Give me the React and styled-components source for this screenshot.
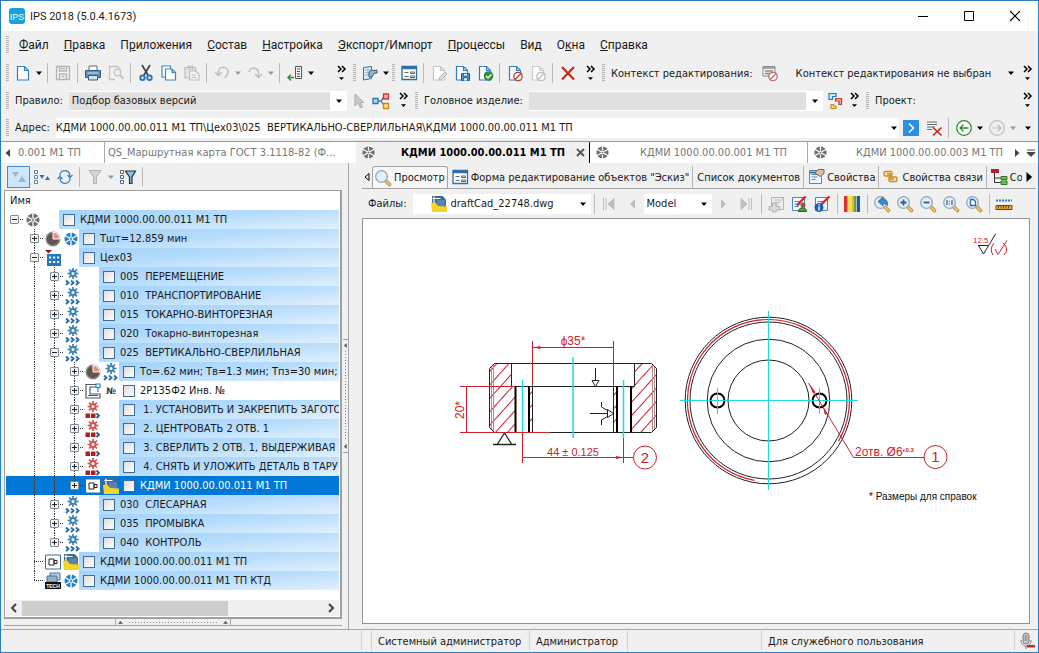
import React from "react";
import styled, { createGlobalStyle, css } from "styled-components";

const GlobalStyle = createGlobalStyle`
  * {
    box-sizing: border-box;
  }
  body {
    margin: 0;
    background: #f0f0f0;
    color: #1a1a1a;
    font-family: "DejaVu Sans Condensed", "DejaVu Sans", sans-serif;
    font-size: 11px;
  }
  button, input, select {
    font: inherit;
    color: inherit;
    border: 0;
    padding: 0;
    margin: 0;
    background: none;
  }
`;

//Icons, all drawn on a 16px grid
const Svg = styled.svg`
  display: block;
  flex: none;
  overflow: visible;
`;

const Page = ({ c = "#2f7fc0" }) => (
  <path d="M2.500 1.500h7l4 4v9.500h-11zM9.500 1.500v4h4" fill="#fff" stroke={c} strokeWidth="1.200" />
);
const Ban = ({ c = "#c0392b" }) => (
  <g fill="#fff" stroke={c} strokeWidth="1.300">
    <circle cx="11" cy="11.500" r="4.200" />
    <path d="M8 14.500l6-6" />
  </g>
);
const Gear = ({ c }) => (
  <g stroke={c} fill="none">
    <circle cx="8" cy="4.500" r="2.600" strokeWidth="2" />
    <path d="M8-1v2.500M8 7.500V10M2.500 4.500H5M11 4.500h2.500M4 .5L6 2.500M10 6.500l2 2M12 .5L10 2.500M6 6.500l-2 2" strokeWidth="1.700" />
  </g>
);
const Chevrons = ({ c = "#2f6fa5" }) => (
  <path d="M1 11.500l2.500 2.300L1 16M6 11.500l2.500 2.300L6 16M11 11.500l2.500 2.300L11 16" fill="none" stroke={c} strokeWidth="2" />
);
const Wheel = ({ c }) => (
  <g>
    <circle cx="8" cy="8" r="6.500" fill={c} />
    <path d="M2 4.500l12 7M14 4.500l-12 7M8 1v5M8 10v5" stroke="#fff" strokeWidth="1.300" />
    <circle cx="8" cy="8" r="1.800" fill="#fff" />
    <circle cx="8" cy="8" r="1" fill={c} />
  </g>
);
const Lens = ({ children }) => (
  <g>
    <path d="M10.500 10.500l4 4" stroke="#b8902f" strokeWidth="3.600" strokeLinecap="round" />
    <path d="M10.500 10.500l4 4" stroke="#f0d27a" strokeWidth="1.600" strokeLinecap="round" />
    <circle cx="6.500" cy="6.500" r="5.800" fill="#e2effa" stroke="#93a5b5" strokeWidth="1.300" />
    {children}
  </g>
);
const Sheet = ({ c = "#4a86c0" }) => (
  <g>
    <path d="M1.500 1.500h12v13h-12z" fill="#f2f8ff" stroke={c} />
    <path d="M3.500 5.500h6M3.500 8h6M3.500 10.500h4" stroke={c} />
  </g>
);
const Clock = () => (
  <g>
    <circle cx="8" cy="8" r="6.800" fill="#5f5552" stroke="#8d8887" strokeWidth="1.400" />
    <path d="M8 8V1.200A6.800 6.800 0 0 1 14.800 8z" fill="#e88d84" stroke="#fff" />
  </g>
);

const glyphs = {
  page: <Page />,
  save: (
    <g fill="none" stroke="#b4b4b4" strokeWidth="1.300">
      <path d="M1.500 1.500h13v13h-13zM4.500 1.500v4.500h7V1.500M4.500 14.500V9h7v5.500M6.500 11.500h3M6 3.700h4" />
    </g>
  ),
  print: (
    <g>
      <path d="M4 1h8v5H4z" fill="#fff" stroke="#52697c" />
      <path d="M.5 5.500h15v7H.5z" fill="#5d8fb8" stroke="#3b5c79" />
      <path d="M2.500 8h11" stroke="#d6e8f5" />
      <path d="M3.500 10.500h9v4.500h-9z" fill="#cfe6f8" stroke="#3b5c79" />
    </g>
  ),
  preview: (
    <g fill="none" stroke="#c4c4c4" strokeWidth="1.300">
      <path d="M7 14.500H1.500v-13h8l3 3" />
      <circle cx="9.500" cy="7.500" r="3.300" />
      <path d="M12 10l3.500 4" strokeWidth="2" />
    </g>
  ),
  cut: (
    <g fill="none">
      <path d="M4 0l6.500 11M12 0L5.500 11" stroke="#3a4650" strokeWidth="1.700" />
      <circle cx="4.500" cy="12.700" r="2.200" stroke="#2b76b5" strokeWidth="2" />
      <circle cx="11.500" cy="12.700" r="2.200" stroke="#2b76b5" strokeWidth="2" />
    </g>
  ),
  copy: (
    <g fill="#fff" stroke="#3f86b8" strokeWidth="1.200">
      <path d="M1 1h8.500v11H1z" />
      <path d="M4.500 4h6.500l3.500 3.500v7.500h-10zM11 4v3.500h3.500" />
    </g>
  ),
  paste: (
    <g fill="#e8e8e8" stroke="#bcbcbc" strokeWidth="1.200">
      <path d="M1 2.500h10.500V13H1zM4 1h4.500v3H4z" />
      <path d="M5.500 6h6l3.500 3v6H5.500zM7.500 10h5M7.500 12.500h5" fill="#f5f5f5" />
    </g>
  ),
  undo: <path d="M1 7l3.500 3.500L8 7M4.500 10V7a4.800 4.800 0 0 1 9.600 0c0 3-2 4.500-3.500 6" fill="none" stroke="#bdbdbd" strokeWidth="1.400" />,
  redo: <path d="M15 9l-3.500 3.500L8 9M11.500 12V8A4.800 4.800 0 0 0 2 7" fill="none" stroke="#bdbdbd" strokeWidth="1.400" />,
  insert: (
    <g fill="none">
      <path d="M8.500 1.500h6v12h-6z" stroke="#555" />
      <path d="M10 4h3M10 6.500h3M10 9h3M10 11.500h3" stroke="#555" />
      <path d="M7 12.500H1M4 9.500l-3 3 3 3" stroke="#2e8b3d" strokeWidth="1.500" />
    </g>
  ),
  plug: (
    <g>
      <path d="M1.500 2.500l8-1v12l-8 1.500z" fill="#d7e9f8" stroke="#3f6f9c" />
      <path d="M3.500 5l4-.5M3.500 7.500l4-.5M3.500 10l4-.5" stroke="#7daad0" />
      <path d="M7 7l2-2 3 .5 3-.5v3l-3 .5-2 3.500H7z" fill="#8fb3d0" stroke="#4b5b68" />
    </g>
  ),
  form: (
    <g>
      <path d="M1 1.500h14.500v13H1z" fill="#fff" stroke="#2f6fa5" strokeWidth="1.300" />
      <path d="M1 3h14.500" stroke="#2f6fa5" strokeWidth="2.500" />
      <path d="M3.500 7.500h4M3.500 11.500h4M9.500 7h4v1.500h-4zM9.500 11h4v1.500h-4z" fill="none" stroke="#5c6770" />
    </g>
  ),
  edit: (
    <g>
      <Page c="#c4c4c4" />
      <path d="M8 13l6-6 2 2-6 6H8z" fill="#ddd" stroke="#b5b5b5" />
    </g>
  ),
  pageSave: (
    <g>
      <Page />
      <path d="M7.500 8.500h8v7h-8z" fill="#3f93d6" stroke="#1e5e97" />
      <path d="M9.500 8.500h4v2.500h-4zM9.500 15.500v-2.500h4v2.500" fill="#fff" stroke="#1e5e97" strokeWidth=".8" />
    </g>
  ),
  pageOk: (
    <g>
      <Page />
      <circle cx="11.500" cy="11" r="4.800" fill="#2d8a3e" />
      <path d="M9 11l2 2 3.500-3.500" fill="none" stroke="#fff" strokeWidth="1.500" />
    </g>
  ),
  pageBan: (
    <g>
      <Page />
      <Ban />
    </g>
  ),
  pageBanOff: (
    <g>
      <Page c="#cbcbcb" />
      <Ban c="#bcbcbc" />
    </g>
  ),
  remove: <path d="M2 2l12 12.500M14 2L2 14.500" fill="none" stroke="#c42b1c" strokeWidth="2.200" />,
  context: (
    <g>
      <path d="M1 1.500h12v9.500H1z" fill="#f4f4f4" stroke="#8a8a8a" />
      <path d="M1 3h12M3 6h8M3 8.500h5" stroke="#8a8a8a" strokeWidth="1.500" />
      <Ban c="#c0706a" />
    </g>
  ),
  pointer: <path d="M5 1v12l3-3 2.500 5 2-1L10 9.500h4z" fill="#c8c8c8" stroke="#adadad" />,
  links: (
    <g strokeWidth="1.300">
      <path d="M5 8h3l3-4.500M8 8l3 4.500" fill="none" stroke="#6b6b6b" />
      <path d="M0 5.500h5v5H0z" fill="#a9dcf5" stroke="#2379b5" />
      <path d="M10.500 1h5v5h-5z" fill="#f5a9a9" stroke="#c23b3b" />
      <path d="M10.500 10.500h5v5h-5z" fill="#f9e08b" stroke="#c78a1a" />
    </g>
  ),
  parts: (
    <g strokeWidth="1.200">
      <path d="M2 6.500v-6h7v3H5.500v3z" fill="#c7e8fa" stroke="#2379b5" />
      <path d="M8.500 5.500h6v6H12V8H8.500z" fill="#f5a9a9" stroke="#c23b3b" />
      <path d="M4 11.500v4h5V13H6.500v-1.500z" fill="#f9e08b" stroke="#c78a1a" />
    </g>
  ),
  go: (
    <g>
      <path d="M0 0h16v16H0z" fill="#2d8fe0" />
      <path d="M6 3.500L10.500 8 6 12.500" fill="none" stroke="#fff" strokeWidth="1.500" />
    </g>
  ),
  clearList: (
    <g>
      <path d="M1 2h10M1 4.500h10M1 7h8M1 9.500h5" stroke="#6b6b6b" />
      <path d="M7 7.500l8.500 8M15.500 7.500L7 15.500" stroke="#c42b1c" strokeWidth="1.700" />
    </g>
  ),
  back: (
    <g fill="none" stroke="#2d8a2d" strokeWidth="1.300">
      <circle cx="8" cy="8" r="7.300" fill="#fff" />
      <path d="M12.500 8H4M7.500 4.500L4 8l3.500 3.500" />
    </g>
  ),
  forward: (
    <g fill="none" stroke="#bdbdbd" strokeWidth="1.200">
      <circle cx="8" cy="8" r="7.300" />
      <path d="M3.500 8H12M8.500 4.500L12 8l-3.500 3.500" />
    </g>
  ),
  wheel: <Wheel c="#6f6f6f" />,
  wheelBlue: <Wheel c="#2283cc" />,
  sort: (
    <g fill="#9fb4c4">
      <path d="M1 3h7l-3.500 5zM7 13h8l-4-6z" />
    </g>
  ),
  sortList: (
    <g>
      <path d="M.5 1.500h3v3h-3zM.5 6.500h3v3h-3zM.5 11.500h3v3h-3z" fill="#fff" stroke="#5a87ae" />
      <path d="M5.500 6h5L8 10zM11 11h5l-2.500-4z" fill="#3a6f9e" />
    </g>
  ),
  refresh: <path d="M3 7V6a5 5 0 0 1 9.500-1.500L13 8M13 9v1a5 5 0 0 1-9.500 1.500L3 8M10.500 6L13 8.500 15.500 6M5.500 10L3 7.500.5 10" fill="none" stroke="#3c87bd" strokeWidth="1.300" />,
  filterOff: <path d="M2 1.500h12L9.500 8v6.500h-3V8z" fill="#d5d5d5" stroke="#b3b3b3" />,
  filter: (
    <g>
      <path d="M.5 1.500h3v3h-3zM.5 6.500h3v3h-3zM.5 11.500h3v3h-3z" fill="#fff" stroke="#4f6a80" />
      <path d="M5.500 2h10L12 8v6.500H9.500V8z" fill="#8ec3ea" stroke="#26333d" strokeWidth="1.200" />
    </g>
  ),
  clock: <Clock />,
  shop: (
    <g>
      <path d="M2 4h14v12H2z" fill="#2478bd" />
      <path d="M4 7.500h2.200M8 7.500h2.200M12 7.500h2.200M4 12h2.200M8 12h2.200M12 12h2.200" stroke="#e9f4fc" strokeWidth="2.200" />
      <path d="M0 0h7L3.500 3.500z" fill="#8f1f1f" />
    </g>
  ),
  operation: (
    <g>
      <Gear c="#3a80b8" />
      <Chevrons />
    </g>
  ),
  step: (
    <g>
      <Gear c="#d0564f" />
      <path d="M.5 11.500H5V16H.5zM6 11.500h4.500V16H6z" fill="#b21d1d" />
      <path d="M11.500 11.500l2.500 2.300-2.500 2.200" fill="none" stroke="#35546e" strokeWidth="1.800" />
    </g>
  ),
  machine: (
    <g fill="#fff" stroke="#4b5c6b" strokeWidth="1.200">
      <path d="M1 1.500h13v2.500H5v7h10v4H1zM3 12.500h10" />
      <path d="M11 1h4v3.500h-4zM13 5v4" stroke="#2283cc" />
    </g>
  ),
  part: (
    <g fill="#fff">
      <path d="M.5 1h15v14H.5z" stroke="#2f6fa5" />
      <path d="M4 5h5v6H4zM9 6.500h3v3H9z" stroke="#222" />
    </g>
  ),
  drawing: (
    <g>
      <path d="M1 0h10.500L15 3.500V15H1z" fill="#3c6a94" />
      <path d="M1.500 2.500h8M3 .5v6" stroke="#fff" strokeWidth="1.200" />
      <path d="M6 4h8v6H6z" fill="#5583b3" />
      <path d="M0 7l4-1 3 4 9 .5V16H1z" fill="#f6d327" />
    </g>
  ),
  tech: (
    <g>
      <path d="M5 0h10v7H5z" fill="#b8d0e4" stroke="#55748f" />
      <path d="M2 3h10v6H2z" fill="#8fb1cc" stroke="#55748f" />
      <path d="M0 9h16v7H0z" fill="#111" />
      <text x="8" y="15" fill="#fff" fontSize="5" fontWeight="bold" textAnchor="middle" fontFamily="Liberation Sans, sans-serif">
        TECH
      </text>
    </g>
  ),
  number: (
    <text x="8" y="11" fontSize="9" fontWeight="bold" textAnchor="middle" fill="#333">
      №
    </text>
  ),
  lens: <Lens />,
  props: (
    <g>
      <Sheet />
      <path d="M1.500 3.500h12" stroke="#3f6f9c" strokeWidth="2" />
      <path d="M7 4l3-3.500h6v4l-4 3z" fill="#e7bd95" stroke="#5c6a86" />
    </g>
  ),
  chain: (
    <g fill="#fbe6bd" stroke="#cc8a22" strokeWidth="1.400">
      <rect x="1" y="2.500" width="8" height="4.500" rx="1.500" />
      <rect x="6" y="8" width="8" height="4.500" rx="1.500" />
      <path d="M4 5h3.500v5H11" fill="none" />
    </g>
  ),
  consist: (
    <g>
      <path d="M3.500 4v9.500H10M3.500 9H10" fill="none" stroke="#333" />
      <path d="M0 0h8v4H0z" fill="#b71f2b" />
      <path d="M10 7.500h6v3h-6zM10 12h6v3.500h-6z" fill="#6cc04a" stroke="#2f7a26" />
    </g>
  ),
  first: <path d="M2.500 2v12M5 2v12M13 2.500v11L7 8z" fill="#bdbdbd" stroke="#bdbdbd" />,
  prev: <path d="M11 3v10L6 8z" fill="#bdbdbd" />,
  next: <path d="M6 3v10l5-5z" fill="#bdbdbd" />,
  last: <path d="M3 2.500v11L9 8zM11 2v12M13.500 2v12" fill="#bdbdbd" stroke="#bdbdbd" />,
  addNote: (
    <g>
      <path d="M3.500 1.500h12v12h-12z" fill="#eee" stroke="#b5b5b5" />
      <path d="M6 4h6M6 6.500h5M7 11l9-10" stroke="#bcbcbc" />
      <path d="M1 10.500h3.500V7H8v3.500h3.500V14H8v2H4.500v-2H1z" fill="#ddd" stroke="#b0b0b0" />
    </g>
  ),
  noteUser: (
    <g>
      <Sheet />
      <path d="M6 9.500l8.500-9" stroke="#cc2a2a" strokeWidth="2.400" />
      <circle cx="12" cy="9" r="2.500" fill="#8a5a3a" />
      <path d="M7.500 15.500c0-5 8-5 8 0z" fill="#4e9a3e" stroke="#2c5e24" />
    </g>
  ),
  noteInfo: (
    <g>
      <Sheet />
      <path d="M7 8.500l8.500-8" stroke="#cc2a2a" strokeWidth="2.400" />
      <circle cx="5" cy="11.500" r="4.500" fill="#1f62b3" />
      <path d="M5 10.500v4M5 8.300v1.200" stroke="#fff" strokeWidth="1.400" />
    </g>
  ),
  colors: (
    <g>
      <path d="M0 0h3.500v16H0z" fill="#d8302f" />
      <path d="M4 0h3v16H4z" fill="#f3e04b" />
      <path d="M7.500 0h2.500v16H7.500z" fill="#eab63a" />
      <path d="M10 0h2.500v16H10z" fill="#58a55a" />
      <path d="M13 0h3v16h-3z" fill="#2553b8" />
    </g>
  ),
  zoomBack: (
    <Lens>
      <path d="M4 5.500L9 1v2.500c4 0 5 3 4.500 6C12.500 8 11 7.500 9 7.500V10z" fill="#3a8ad0" stroke="#1e5e97" strokeWidth=".8" />
    </Lens>
  ),
  zoomIn: (
    <Lens>
      <path d="M3.500 6.500h6M6.500 3.500v6" stroke="#2b5f93" strokeWidth="1.800" />
    </Lens>
  ),
  zoomOut: (
    <Lens>
      <path d="M3.500 6.500h6" stroke="#2b5f93" strokeWidth="1.800" />
    </Lens>
  ),
  zoomOne: (
    <Lens>
      <path d="M4 4v5M9 4v5M6.500 5v1M6.500 7.500v1" stroke="#4a5d70" strokeWidth="1.200" />
    </Lens>
  ),
  zoomPage: (
    <Lens>
      <path d="M4.500 3.500h3l2 2v4h-5z" fill="#fff" stroke="#1f6fb8" strokeWidth="1.300" />
    </Lens>
  ),
  ruler: (
    <g>
      <path d="M0 4.500h16" stroke="#2b7fc4" strokeWidth="2" strokeDasharray="2 1" />
      <path d="M0 9.500h16v4H0z" fill="#f0a83a" stroke="#6b4a12" />
      <path d="M2.500 9.500v3M5 9.500v3M7.500 9.500v3M10 9.500v3M12.500 9.500v3" stroke="#6b4a12" />
    </g>
  ),
  mic: (
    <g>
      <rect x="4" y="0" width="6" height="11" rx="3" fill="#c9c9c9" stroke="#7b7b7b" />
      <path d="M5.500 3h3M5.500 5h3M5.500 7h3M2 7c0 8 10 8 10 0M7 13v3" fill="none" stroke="#7b7b7b" />
      <path d="M8 12h8v2.500H8z" fill="#c42b2b" />
    </g>
  ),
};

const Icon = ({ name, size = 16 }) => (
  <Svg width={size} height={size} viewBox="0 0 16 16" aria-hidden="true">
    {glyphs[name]}
  </Svg>
);

const Arrow = ({ dir = "down", c = "#000", size = 7 }) => {
  const turn = { down: 0, left: 90, up: 180, right: 270 }[dir];
  return (
    <Svg width={size} height={size} viewBox="0 0 8 8" aria-hidden="true">
      <path d="M0 2h8L4 6.500z" fill={c} transform={`rotate(${turn} 4 4)`} />
    </Svg>
  );
};

//Shared controls
const IconButton = styled.button`
  display: flex;
  align-items: center;
  justify-content: center;
  flex: none;
  width: 23px;
  height: 22px;
  ${({ $active }) =>
    $active &&
    css`
      background: #cce6fb;
      border: 1px solid #3c8fd0;
    `}
`;

const CaretButton = styled(IconButton)`
  width: ${({ $wide }) => ($wide ? 20 : 10)}px;
`;

const Tool = ({ name, label, active }) => (
  <IconButton type="button" aria-label={label} $active={active}>
    <Icon name={name} />
  </IconButton>
);

const Caret = ({ c, label = "Ещё", wide }) => (
  <CaretButton type="button" aria-label={label} $wide={wide}>
    <Arrow c={c} size={6} />
  </CaretButton>
);

const Divider = styled.span`
  flex: none;
  width: 1px;
  height: 20px;
  margin: 0 3px;
  background: #b9b9b9;
`;

const Grip = styled.span`
  flex: none;
  width: 3px;
  height: 18px;
  margin: 0 2px 0 1px;
  background: repeating-linear-gradient(#b2b2b2 0 1px, transparent 1px 2px);
`;

const MoreButton = styled.button`
  display: flex;
  flex-direction: column;
  align-items: center;
  gap: 4px;
  flex: none;
  width: 16px;
  margin: 0 3px 0 auto;
`;

const More = () => (
  <MoreButton type="button" aria-label="Другие кнопки">
    <Svg width="9" height="6" viewBox="0 0 9 6" aria-hidden="true">
      <path d="M1 0l3 3-3 3M5 0l3 3-3 3" fill="none" stroke="#000" strokeWidth="1.500" />
    </Svg>
    <Arrow size={5} />
  </MoreButton>
);

const Bar = styled.div`
  display: flex;
  align-items: center;
  height: ${({ $h }) => $h}px;
  padding-left: 4px;
`;

const Group = styled.div`
  display: flex;
  align-items: center;
  min-width: 0;
  flex: ${({ $grow }) => ($grow ? "1 1 0" : "0 0 auto")};
  ${({ $basis }) => $basis && `flex: 0 0 ${$basis}px;`}
`;

const Label = styled.label`
  flex: none;
  padding: 0 6px 0 4px;
  white-space: nowrap;
`;

const SelectBox = styled.div`
  display: flex;
  align-items: center;
  position: relative;
  flex: ${({ $width }) => ($width ? `0 0 ${$width}px` : "1 1 0")};
  min-width: 0;
  height: 20px;
  background: ${({ $plain }) => ($plain ? "transparent" : "#fff")};
  select {
    appearance: none;
    flex: 1;
    min-width: 0;
    height: 18px;
    margin-right: 17px;
    padding-left: ${({ $icon, $plain }) => ($icon ? 38 : $plain ? 14 : 3)}px;
    background: ${({ $gray }) => ($gray ? "#e0e0e0" : "transparent")};
  }
  > svg:last-child {
    position: absolute;
    right: 5px;
    pointer-events: none;
  }
`;

const SelectIcon = styled.span`
  position: absolute;
  left: 18px;
  pointer-events: none;
`;

const Select = ({ id, value, icon, label, ...look }) => (
  <SelectBox $icon={!!icon} {...look}>
    {icon && (
      <SelectIcon>
        <Icon name={icon} />
      </SelectIcon>
    )}
    <select id={id} aria-label={label}>
      <option>{value}</option>
    </select>
    <Arrow size={6} />
  </SelectBox>
);

//Window frame
const Window = styled.div`
  display: flex;
  flex-direction: column;
  min-height: 100vh;
  border: 1px solid #2a7fc4;
  background: #f0f0f0;
`;

const TitleBar = styled.header`
  display: flex;
  align-items: center;
  height: 30px;
  padding-left: 8px;
  background: #fff;
  h1 {
    flex: 1;
    margin: 0;
    padding-left: 5px;
    font-family: Roboto, sans-serif;
    font-size: 11px;
    font-weight: normal;
  }
  button {
    display: flex;
    justify-content: center;
    width: 46px;
  }
`;

const Menu = styled.nav`
  display: flex;
  align-items: center;
  gap: 15px;
  height: 28px;
  padding-left: 4px;
  font-family: Roboto, sans-serif;
  font-size: 12px;
  a {
    color: #1a1a1a;
    text-decoration: none;
  }
  ${Grip} {
    margin-right: -5px;
  }
`;

const Address = styled.div`
  display: flex;
  align-items: center;
  flex: 1;
  height: 20px;
  background: #fff;
  input {
    flex: 1;
    min-width: 0;
  }
`;

const menu = [
  ["", "Ф", "айл"],
  ["", "П", "равка"],
  ["П", "р", "иложения"],
  ["", "С", "остав"],
  ["", "Н", "астройка"],
  ["", "Э", "кспорт/Импорт"],
  ["", "П", "роцессы"],
  ["Вид", "", ""],
  ["О", "к", "на"],
  ["", "С", "правка"],
];

const Header = () => (
  <>
    <TitleBar>
      <Svg width="16" height="16" viewBox="0 0 16 16" aria-hidden="true">
        <rect width="16" height="16" rx="3" fill="#1a9fd9" />
        <text x="8" y="12" fill="#fff" fontSize="9" textAnchor="middle" fontFamily="Liberation Sans, sans-serif">
          IPS
        </text>
      </Svg>
      <h1>IPS 2018 (5.0.4.1673)</h1>
      <button type="button" aria-label="Свернуть">
        <Svg width="10" height="10"><path d="M0 5.500h10" stroke="#000" /></Svg>
      </button>
      <button type="button" aria-label="Развернуть">
        <Svg width="10" height="10"><path d="M.5.5h9v9h-9z" fill="none" stroke="#000" /></Svg>
      </button>
      <button type="button" aria-label="Закрыть">
        <Svg width="10" height="10"><path d="M0 0l10 10M10 0L0 10" stroke="#000" strokeWidth="1.200" /></Svg>
      </button>
    </TitleBar>
    <Menu>
      <Grip />
      {menu.map(([before, key, after], i) => (
        <a href="#menu" key={i}>
          {before}
          {key && <u>{key}</u>}
          {after}
        </a>
      ))}
    </Menu>
  </>
);

const Toolbars = () => (
  <>
    <Bar $h={28}>
      <Group $basis={347}>
        <Grip />
        <Tool name="page" label="Создать" />
        <Caret />
        <Divider />
        <Tool name="save" label="Сохранить" />
        <Divider />
        <Tool name="print" label="Печать" />
        <Tool name="preview" label="Просмотр печати" />
        <Divider />
        <Tool name="cut" label="Вырезать" />
        <Tool name="copy" label="Копировать" />
        <Tool name="paste" label="Вставить" />
        <Divider />
        <Tool name="undo" label="Отменить" />
        <Caret c="#999" />
        <Tool name="redo" label="Повторить" />
        <Caret c="#999" />
        <Divider />
        <Tool name="insert" label="Включить в состав" />
        <Caret />
        <More />
      </Group>
      <Group $basis={39}>
        <Grip />
        <Tool name="plug" label="Модули" />
        <Caret />
      </Group>
      <Group $basis={210}>
        <Grip />
        <Tool name="form" label="Форма" />
        <Divider />
        <Tool name="edit" label="Редактировать" />
        <Tool name="pageSave" label="Сохранить документ" />
        <Tool name="pageOk" label="Завершить" />
        <Divider />
        <Tool name="pageBan" label="Отказаться" />
        <Tool name="pageBanOff" label="Отменить изменения" />
        <Divider />
        <Tool name="remove" label="Удалить" />
        <More />
      </Group>
      <Group $grow>
        <Grip />
        <Label htmlFor="context">Контекст редактирования:</Label>
        <Tool name="context" label="Сбросить контекст" />
        <Select id="context" value="Контекст редактирования не выбран" $plain />
        <More />
      </Group>
    </Bar>
    <Bar $h={27}>
      <Group $basis={409}>
        <Grip />
        <Label htmlFor="rule">Правило:</Label>
        <Select id="rule" value="Подбор базовых версий" $gray $width={278} />
        <Tool name="pointer" label="Выбрать" />
        <Tool name="links" label="Связи" />
        <More />
      </Group>
      <Group $grow>
        <Grip />
        <Label htmlFor="product">Головное изделие:</Label>
        <Select id="product" value="" $gray />
        <Tool name="parts" label="Исполнения" />
        <More />
      </Group>
      <Group $basis={173}>
        <Grip />
        <Label as="span">Проект:</Label>
        <More />
      </Group>
    </Bar>
    <Bar $h={27}>
      <Grip />
      <Label htmlFor="address">Адрес:</Label>
      <Address>
        <input id="address" defaultValue="КДМИ 1000.00.00.011 М1 ТП\Цех03\025  ВЕРТИКАЛЬНО-СВЕРЛИЛЬНАЯ\КДМИ 1000.00.00.011 М1 ТП" />
        <Caret label="История адресов" />
      </Address>
      <Tool name="go" label="Перейти" />
      <Tool name="clearList" label="Очистить" />
      <Divider />
      <Tool name="back" label="Назад" />
      <Caret />
      <Tool name="forward" label="Вперёд" />
      <Caret c="#999" />
      <Caret wide />
    </Bar>
  </>
);

//Document tabs
const DocTabs = styled.nav`
  display: flex;
  align-items: stretch;
  height: 22px;
  border-top: 1px solid #9a9a9a;
  background: #fff;
`;

const DocTabList = styled.div`
  display: flex;
  flex: 1;
  min-width: 0;
  overflow: hidden;
`;

const DocTab = styled.a`
  display: flex;
  align-items: center;
  flex: 0 0 ${({ $width }) => $width}px;
  padding: 0 5px 0 ${({ $left }) => ($left ? 3 : 5)}px;
  color: #777;
  text-decoration: none;
  white-space: nowrap;
  box-shadow: inset -1px 0 0 ${({ $end }) => $end || "transparent"};
  ${({ $active }) =>
    $active &&
    css`
      background: #f0f0f0;
      color: #000;
      font-weight: bold;
    `}
  span {
    flex: 1;
    overflow: hidden;
    padding-left: ${({ $left }) => ($left ? 0 : 14)}px;
    text-align: ${({ $left }) => ($left ? "left" : "center")};
  }
`;

const NavButton = styled(IconButton)`
  width: ${({ $slim }) => ($slim ? 10 : 14)}px;
  height: auto;
`;

const Documents = () => (
  <DocTabs>
    <NavButton type="button" aria-label="Предыдущие вкладки">
      <Arrow dir="left" c="#444" size={8} />
    </NavButton>
    <DocTabList>
      <DocTab href="#doc1" $width={90} $left $end="#aaa">
        <span>0.001 М1 ТП</span>
      </DocTab>
      <DocTab href="#doc2" $width={251} $left>
        <span>QS_Маршрутная карта ГОСТ 3.1118-82 (Ф...</span>
      </DocTab>
      <DocTab href="#doc3" $width={234} $active $end="#000">
        <Icon name="wheel" size={15} />
        <span>КДМИ 1000.00.00.011 М1 ТП</span>
        <Svg width="9" height="9" viewBox="0 0 9 9" aria-hidden="true">
          <path d="M1 1l7 7M8 1L1 8" stroke="#555" strokeWidth="1.800" />
        </Svg>
      </DocTab>
      <DocTab href="#doc4" $width={218} $end="#aaa">
        <Icon name="wheel" size={15} />
        <span>КДМИ 1000.00.00.001 М1 ТП</span>
      </DocTab>
      <DocTab href="#doc5" $width={214}>
        <Icon name="wheel" size={15} />
        <span>КДМИ 1000.00.00.003 М1 ТП</span>
      </DocTab>
    </DocTabList>
    <NavButton type="button" aria-label="Следующие вкладки">
      <Arrow dir="right" c="#444" size={8} />
    </NavButton>
    <NavButton type="button" aria-label="Список вкладок">
      <Svg width="8" height="8" viewBox="0 0 8 8" aria-hidden="true">
        <path d="M0 1h8M0 3.500h8l-4 4z" fill="#444" stroke="#444" strokeWidth="1" />
      </Svg>
    </NavButton>
  </DocTabs>
);

//Tree
const Main = styled.main`
  display: flex;
  flex: 1;
  border-bottom: 1px solid #a5a5a5;
`;

const Side = styled.aside`
  display: flex;
  flex-direction: column;
  flex: 0 0 341px;
  min-width: 0;
  padding-left: 3px;
`;

const SideTools = styled.div`
  display: flex;
  align-items: center;
  height: 27px;
  padding-left: 3px;
`;

const Frame = styled.div`
  display: flex;
  flex-direction: column;
  flex: 1;
  border: 1px solid #a0a0a0;
  border-right-width: 2px;
  border-bottom-width: 2px;
  background: #fff;
`;

const TreeHead = styled.div`
  height: 19px;
  padding: 3px 5px;
`;

const Row = styled.div`
  display: flex;
  height: 19px;
  margin: 0 1px;
  ${({ $selected }) =>
    $selected &&
    css`
      background: #0078d7;
      color: #fff;
    `}
`;

const Guide = styled.span`
  flex: none;
  width: 20px;
  background: ${({ $line }) => ($line ? "repeating-linear-gradient(#333 0 1px, transparent 1px 2px) 8px 0 / 1px 100% no-repeat" : "none")};
`;

const Branch = styled.span`
  display: flex;
  align-items: center;
  flex: none;
  width: 18px;
  padding-left: 4px;
  background: repeating-linear-gradient(to right, #333 0 1px, transparent 1px 2px) 8px 9px / 10px 1px no-repeat,
    repeating-linear-gradient(#333 0 1px, transparent 1px 2px) 8px 0 / 1px ${({ $last }) => ($last ? "50%" : "100%")} no-repeat;
  ${({ $root }) => $root && "background-size: 10px 1px, 0 0;"}
`;

const Expander = styled.button`
  display: block;
  width: 9px;
  height: 9px;
  && {
    border: 1px solid #7d8a96;
    border-radius: 1px;
    background: linear-gradient(#222, #222) center / 5px 1px no-repeat,
      ${({ $open }) => ($open ? "" : "linear-gradient(#222, #222) center / 1px 5px no-repeat,")}
      #f2f4f6;
  }
`;

const Icons = styled.span`
  display: flex;
  align-items: center;
  gap: 2px;
  flex: none;
  width: 35px;
  padding-left: 1px;
`;

const Name = styled.label`
  display: flex;
  align-items: center;
  gap: 5px;
  flex: 1;
  min-width: 0;
  overflow: hidden;
  padding-left: 4px;
  white-space: pre;
  background: ${({ $plain }) => ($plain ? "none" : "linear-gradient(to bottom right, #a4d3fb 0%, #b5dcfc 45%, #e2f0fc 100%)")};
`;

const Check = styled.input`
  appearance: none;
  flex: none;
  width: 12px;
  height: 12px;
  && {
    border: 1px solid #3f6c94;
    background: linear-gradient(135deg, #dcdcdc, #fff);
  }
`;

const ScrollBar = styled.div`
  display: flex;
  align-items: center;
  height: 16px;
  margin: auto 1px 1px;
  background: #f0f0f0;
`;

const ScrollThumb = styled.span`
  flex: 0 0 62%;
  height: 15px;
  background: #cdcdcd;
`;

const ScrollButton = styled.button`
  display: flex;
  align-items: center;
  justify-content: center;
  width: 16px;
  &:last-child {
    margin-left: auto;
  }
`;

const Chevron = ({ right }) => (
  <Svg width="6" height="8" viewBox="0 0 6 8" aria-hidden="true">
    <path d={right ? "M1 0l4 4-4 4" : "M5 0L1 4l4 4"} fill="none" stroke="#444" strokeWidth="2" />
  </Svg>
);

const HSplit = styled.div`
  display: flex;
  justify-content: space-between;
  align-items: center;
  width: 116px;
  height: 6px;
  margin: 0 auto;
  border: solid #a5a5a5;
  border-width: 0 1px;
  padding: 0 2px;
  &::before {
    content: "";
    order: 1;
    flex: 1;
    height: 1px;
    margin: 0 6px;
    background: repeating-linear-gradient(to right, #888 0 1px, transparent 1px 3px);
  }
  svg:last-child {
    order: 2;
  }
`;

const SplitLine = styled.div`
  margin-bottom: 3px;
  border-bottom: 1px solid #a5a5a5;
`;

const VSplit = styled.div`
  display: flex;
  flex-direction: column;
  align-items: center;
  justify-content: center;
  flex: 0 0 7px;
  border-right: 1px solid #a5a5a5;
  div {
    display: flex;
    flex-direction: column;
    justify-content: space-between;
    height: 114px;
    padding: 3px 0;
    border: solid #a5a5a5;
    border-width: 1px 0;
    background: repeating-linear-gradient(#888 0 1px, transparent 1px 3px) 50% 50% / 1px 80% no-repeat;
  }
`;

const rows = [
  { level: 0, open: true, icons: ["wheel"], text: "КДМИ 1000.00.00.011 М1 ТП" },
  { level: 1, icons: ["clock", "wheelBlue"], text: "Тшт=12.859 мин" },
  { level: 1, open: true, icons: ["shop"], text: "Цех03" },
  { level: 2, icons: ["operation"], text: "005  ПЕРЕМЕЩЕНИЕ" },
  { level: 2, icons: ["operation"], text: "010  ТРАНСПОРТИРОВАНИЕ" },
  { level: 2, icons: ["operation"], text: "015  ТОКАРНО-ВИНТОРЕЗНАЯ" },
  { level: 2, icons: ["operation"], text: "020  Токарно-винторезная" },
  { level: 2, open: true, icons: ["operation"], text: "025  ВЕРТИКАЛЬНО-СВЕРЛИЛЬНАЯ" },
  { level: 3, icons: ["clock", "operation"], text: "То=.62 мин; Тв=1.3 мин; Тпз=30 мин; Т" },
  { level: 3, icons: ["machine", "number"], text: "2Р135Ф2 Инв. №", plain: true },
  { level: 3, icons: ["step"], text: " 1. УСТАНОВИТЬ И ЗАКРЕПИТЬ ЗАГОТО" },
  { level: 3, icons: ["step"], text: " 2. ЦЕНТРОВАТЬ 2 ОТВ. 1" },
  { level: 3, icons: ["step"], text: " 3. СВЕРЛИТЬ 2 ОТВ. 1, ВЫДЕРЖИВАЯ" },
  { level: 3, icons: ["step"], text: " 4. СНЯТЬ И УЛОЖИТЬ ДЕТАЛЬ В ТАРУ" },
  { level: 3, icons: ["part", "drawing"], text: "КДМИ 1000.00.00.011 М1 ТП", selected: true, last: true },
  { level: 2, icons: ["operation"], text: "030  СЛЕСАРНАЯ" },
  { level: 2, icons: ["operation"], text: "035  ПРОМЫВКА" },
  { level: 2, icons: ["operation"], text: "040  КОНТРОЛЬ", last: true },
  { level: 1, leaf: true, icons: ["part", "drawing"], text: "КДМИ 1000.00.00.011 М1 ТП" },
  { level: 1, leaf: true, icons: ["tech", "wheelBlue"], text: "КДМИ 1000.00.00.011 М1 ТП КТД", last: true },
];

const TreeRow = ({ level, open, leaf, icons, text, plain, selected, last }) => (
  <Row $selected={selected}>
    {Array.from({ length: level }, (_, i) => (
      <Guide key={i} $line={i > 0} />
    ))}
    <Branch $root={level === 0} $last={last}>
      {!leaf && <Expander type="button" $open={open} aria-label={open ? "Свернуть" : "Развернуть"} />}
    </Branch>
    <Icons>
      {icons.map((name) => (
        <Icon name={name} key={name} />
      ))}
    </Icons>
    <Name $plain={plain || selected}>
      <Check type="checkbox" />
      {text}
    </Name>
  </Row>
);

const TreePanel = () => (
  <Side>
    <SideTools>
      <Tool name="sort" label="Сортировка" active />
      <Tool name="sortList" label="Порядок" />
      <Tool name="refresh" label="Обновить" />
      <Divider />
      <Tool name="filterOff" label="Фильтр" />
      <Caret c="#999" />
      <Tool name="filter" label="Настройка фильтра" />
      <Divider />
    </SideTools>
    <Frame>
      <TreeHead>Имя</TreeHead>
      {rows.map((row, i) => (
        <TreeRow key={i} {...row} />
      ))}
      <ScrollBar>
        <ScrollButton type="button" aria-label="Влево">
          <Chevron />
        </ScrollButton>
        <ScrollThumb />
        <ScrollButton type="button" aria-label="Вправо">
          <Chevron right />
        </ScrollButton>
      </ScrollBar>
    </Frame>
    <SplitLine>
      <HSplit>
        <Arrow dir="up" c="#555" size={5} />
        <Arrow dir="up" c="#555" size={5} />
      </HSplit>
    </SplitLine>
  </Side>
);

//Viewer
const Viewer = styled.section`
  display: flex;
  flex-direction: column;
  flex: 1;
  min-width: 0;
  padding: 3px 8px 5px 13px;
`;

const ViewTabs = styled.nav`
  display: flex;
  align-items: center;
  height: 23px;
  margin-right: -6px;
  border-bottom: 1px solid #a5a5a5;
`;

const ViewTabList = styled.div`
  display: flex;
  flex: 1;
  min-width: 0;
  overflow: hidden;
`;

const ViewTab = styled.a`
  display: flex;
  align-items: center;
  gap: 3px;
  flex: none;
  height: 22px;
  padding: 0 ${({ $active }) => ($active ? "2px" : "4px")};
  color: #1a1a1a;
  text-decoration: none;
  white-space: nowrap;
  box-shadow: inset -1px 0 0 ${({ $end }) => ($end ? "#b5b5b5" : "transparent")};
  ${({ $active }) =>
    $active &&
    css`
      border: 1px solid #a5a5a5;
      border-bottom: 0;
      border-radius: 3px 3px 0 0;
      background: #f7f7f7;
    `}
`;

const FileBar = styled.div`
  display: flex;
  align-items: center;
  height: 29px;
  padding-left: 2px;
`;

const Canvas = styled.div`
  display: flex;
  flex: 1;
  border: 1px solid #8f949b;
  background: #fff;
  svg {
    flex: 1;
    width: 100%;
  }
`;

const red = "#d0202e";

const Drawing = () => (
  <svg viewBox="363 219 666 404" fontFamily="Liberation Sans, sans-serif" fill="none">
    <defs>
      <pattern id="hatch" width="9" height="9" patternUnits="userSpaceOnUse" patternTransform="rotate(42)">
        <path d="M.5 0v9" stroke={red} strokeWidth="1" />
      </pattern>
      <marker id="tip" viewBox="0 0 8 4" refX="8" refY="2" markerWidth="8" markerHeight="4" orient="auto-start-reverse">
        <path d="M0 .5L8 2 0 3.500z" fill={red} />
      </marker>
    </defs>

    {/*surface roughness*/}
    <text x="973" y="243" fontSize="8" fill={red}>12.5</text>
    <path d="M978 245.500h10.500M978.500 245.500l5 8.500 12-20" stroke="#222" />
    <path d="M994 243q-5 6-1 12M1003 243q7 6 1 12M995 249l3 5.500 9-14" stroke={red} />

    {/*section*/}
    <path d="M494.500 363.500h17v23h4v46h-21l-5-5v-59zM634.500 363.500h17l5 5v59l-5 5h-20v-46h3zM529 386h3v46h-3zM614 386h3v46h-3z" fill="url(#hatch)" />
    <path d="M491.500 366v64M493.500 365v67M652.500 365v67M654.500 366v64" stroke="#b98a8e" />
    <path d="M494.500 363.500h157l5 5v59l-5 5h-157l-5-5v-59zM511.500 363.500v23h123v-23M532.500 386.500v46M613.500 386.500v46" stroke="#222" />
    <path d="M515.500 386v46M529 386v46M617 386v46M631 386v46" stroke="#000" strokeWidth="2" />
    <path d="M573 357v81M522.500 380v52M623.500 380v58" stroke="#19dbe6" strokeWidth="1.500" />
    <path d="M504.500 433l-7 11M504.500 433l7 11M493 444.500h23" stroke="#222" strokeWidth="1.300" />
    <path d="M595.500 368v12M592 380.500h7l-3.500 6zM590 413.500h17M607.500 409.500v8l6-4zM601.500 402v5l6 3.500M601.500 425v-5l6-3.500" stroke="#222" />

    {/*section sizes*/}
    <g stroke={red}>
      <path d="M532.500 341v45M613.500 341v45M460 386.500h55M460 432.500h90M522.500 432v31M623.500 438v25" />
      <path d="M532.500 347.500h81M466.500 386.500v46M522.500 457.500h101" markerStart="url(#tip)" markerEnd="url(#tip)" />
      <path d="M623 457.500h10" />
      <circle cx="645" cy="457.500" r="11.500" />
    </g>
    <g fill={red} fontSize="12" textAnchor="middle">
      <text x="573" y="345">ϕ35*</text>
      <text x="573" y="456" fontSize="11">44 ± 0.125</text>
      <text transform="translate(464 410) rotate(-90)">20*</text>
      <text x="645" y="463" fontSize="15">2</text>
      <text x="935.500" y="462" fontSize="15">1</text>
    </g>

    {/*top view*/}
    <g stroke="#222">
      <circle cx="768.500" cy="400.500" r="83.300" />
      <circle cx="768.500" cy="400.500" r="78.500" />
      <circle cx="768.500" cy="400.500" r="61.300" />
      <circle cx="768.500" cy="400.500" r="40.500" />
      <g stroke="#000" strokeWidth="2">
        <circle cx="717.500" cy="400.500" r="7" />
        <circle cx="819.500" cy="400.500" r="7" />
      </g>
    </g>
    <path d="M754.500 480.300A81 81 0 1 1 838.600 441" stroke={red} strokeWidth="1.200" />
    <path d="M768.500 311v179M680 400.500h178M717.500 388v26M819.500 388v26" stroke="#19dbe6" />
    <g stroke={red}>
      <path d="M808.500 383l45 74.500h71" />
      <circle cx="935.500" cy="457" r="11.500" />
    </g>
    <path d="M809 384l6.500 8-2.500 1.500zM823 407l2 8 2.500-1.500z" fill={red} />
    <text x="855" y="456" fontSize="12" fill={red}>2отв. Ø6</text>
    <text x="902" y="452" fontSize="6" fontWeight="bold" fill={red}>+0.3</text>
    <text x="869" y="500" fontSize="10" fill="#111">* Размеры для справок</text>
  </svg>
);

const ViewerPanel = () => (
  <Viewer>
    <ViewTabs>
      <NavButton type="button" aria-label="Назад" $slim>
        <Svg width="6" height="8"><path d="M5 .5L1 4l4 3.500z" fill="none" stroke="#000" /></Svg>
      </NavButton>
      <ViewTabList>
        <ViewTab href="#view" $active>
          <Icon name="lens" />
          Просмотр
        </ViewTab>
        <ViewTab href="#form" $end>
          <Icon name="form" />
          Форма редактирование объектов "Эскиз"
        </ViewTab>
        <ViewTab href="#docs" $end>Список документов</ViewTab>
        <ViewTab href="#props" $end>
          <Icon name="props" />
          Свойства
        </ViewTab>
        <ViewTab href="#link" $end>
          <Icon name="chain" />
          Свойства связи
        </ViewTab>
        <ViewTab href="#consist">
          <Icon name="consist" />
          Состав
        </ViewTab>
      </ViewTabList>
      <NavButton type="button" aria-label="Вперёд">
        <Arrow dir="right" size={10} />
      </NavButton>
    </ViewTabs>
    <FileBar>
      <Label htmlFor="file">Файлы:</Label>
      <Select id="file" value="draftCad_22748.dwg" icon="drawing" $width={178} />
      <Divider />
      <Tool name="first" label="Первая" />
      <Tool name="prev" label="Предыдущая" />
      <Select value="Model" label="Лист" $width={68} />
      <Tool name="next" label="Следующая" />
      <Tool name="last" label="Последняя" />
      <Divider />
      <Tool name="addNote" label="Добавить замечание" />
      <Tool name="noteUser" label="Замечания автора" />
      <Tool name="noteInfo" label="Сведения о замечании" />
      <Divider />
      <Tool name="colors" label="Цвета" />
      <Divider />
      <Tool name="zoomBack" label="Предыдущий масштаб" />
      <Tool name="zoomIn" label="Увеличить" />
      <Tool name="zoomOut" label="Уменьшить" />
      <Tool name="zoomOne" label="Масштаб 1:1" />
      <Tool name="zoomPage" label="Вписать" />
      <Divider />
      <Tool name="ruler" label="Измерить" />
    </FileBar>
    <Canvas>
      <Drawing />
    </Canvas>
  </Viewer>
);

//Status bar
const Status = styled.footer`
  display: flex;
  align-items: center;
  height: 22px;
`;

const StatusCell = styled.span`
  flex: ${({ $width }) => ($width ? `0 0 ${$width}px` : "1 1 0")};
  height: 20px;
  padding-left: 6px;
  border-right: 1px solid #d0d0d0;
  line-height: 22px;
  white-space: nowrap;
`;

const App = () => {
  return (
    <Window>
      <GlobalStyle />
      <Header />
      <Toolbars />
      <Documents />
      <Main>
        <TreePanel />
        <VSplit>
          <div>
            <Arrow dir="left" c="#555" size={5} />
            <Arrow dir="left" c="#555" size={5} />
          </div>
        </VSplit>
        <ViewerPanel />
      </Main>
      <Status>
        <StatusCell $width={361} />
        <StatusCell $width={10} />
        <StatusCell $width={158}>Системный администратор</StatusCell>
        <StatusCell $width={98}>Администратор</StatusCell>
        <StatusCell $width={134} />
        <StatusCell>Для служебного пользования</StatusCell>
        <Tool name="mic" label="Микрофон" />
      </Status>
    </Window>
  );
};

export default App;
